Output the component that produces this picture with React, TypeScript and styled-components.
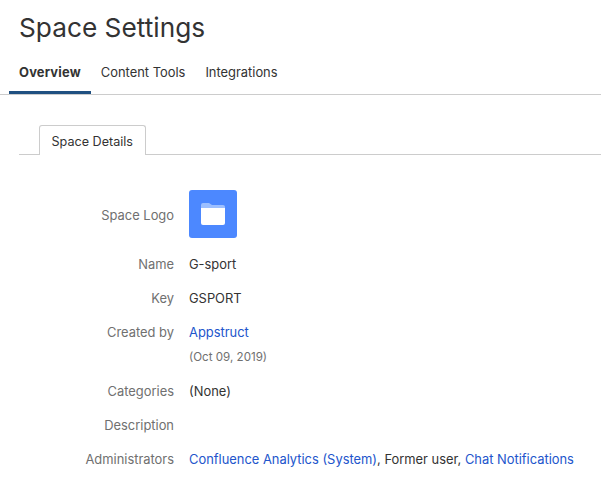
import React from 'react';
import styled, { createGlobalStyle } from 'styled-components';

const GlobalStyle = createGlobalStyle`
  html, body { margin: 0; padding: 0; background: #fff; }
  body {
    font-family: Inter, "Liberation Sans", sans-serif;
    font-size: 12.9px;
    color: #333;
    overflow: hidden;
  }
`;

const App = () => (
  <Page>
    <GlobalStyle />
    <Title>Space Settings</Title>
    <MainTabs>
      <MainTab $active>Overview</MainTab>
      <MainTab>Content Tools</MainTab>
      <MainTab>Integrations</MainTab>
    </MainTabs>
    <SubTabs>
      <SubTab>Space Details</SubTab>
    </SubTabs>
    <Details>
      <LogoRow>
        <LogoLabel>Space Logo</LogoLabel>
        <Logo>
          <svg width="24" height="22" viewBox="0 0 24 22">
            <path d="M0 2a2 2 0 0 1 2-2h6l3 2h11a2 2 0 0 1 2 2v4H0z" fill="#9cbfff" />
            <path d="M0 5h24v15a2 2 0 0 1-2 2H2a2 2 0 0 1-2-2z" fill="#fff" />
          </svg>
        </Logo>
      </LogoRow>
      <Row>
        <Label>Name</Label>
        <PlainText>G-sport</PlainText>
      </Row>
      <Row>
        <Label>Key</Label>
        <PlainText>GSPORT</PlainText>
      </Row>
      <CreatedRow>
        <Label>Created by</Label>
        <div>
          <Link>Appstruct</Link>
          <DateText>(Oct 09, 2019)</DateText>
        </div>
      </CreatedRow>
      <Row>
        <Label>Categories</Label>
        <PlainText>(None)</PlainText>
      </Row>
      <Row>
        <Label>Description</Label>
      </Row>
      <Row>
        <Label>Administrators</Label>
        <PlainText>
          <Link>Confluence Analytics (System)</Link>, Former user, <Link>Chat Notifications</Link>
        </PlainText>
      </Row>
    </Details>
  </Page>
);

export default App;

const Page = styled.div`
  width: 601px;
  height: 504px;
  overflow: hidden;
`;

const Title = styled.h1`
  margin: 0;
  padding: 12px 0 0 19px;
  font-size: 26.25px;
  line-height: 32px;
  font-weight: 400;
  color: #333;
`;

const MainTabs = styled.div`
  display: flex;
  height: 51px;
  padding-left: 9px;
  box-sizing: border-box;
  border-bottom: 1px solid #ccc;
`;

const MainTab = styled.div<{ $active?: boolean }>`
  padding: 0 10px;
  line-height: 58px;
  height: 50px;
  box-sizing: border-box;
  overflow: hidden;
  font-weight: ${(p) => (p.$active ? 700 : 400)};
  letter-spacing: ${(p) => (p.$active ? '0.2px' : '0')};
  color: #333;
  border-bottom: 3px solid ${(p) => (p.$active ? '#205081' : 'transparent')};
  margin-bottom: -1px;
`;

const SubTabs = styled.div`
  display: flex;
  margin: 30px 0 0 19px;
  padding-left: 20px;
  height: 29px;
  border-bottom: 1px solid #ccc;
`;

const SubTab = styled.div`
  height: 30px;
  box-sizing: border-box;
  padding: 0 11.5px;
  line-height: 31px;
  font-size: 12.6px;
  background: #fff;
  color: #333;
  border: 1px solid #ccc;
  border-bottom: none;
  border-radius: 3px 3px 0 0;
`;

const Details = styled.div`
  margin-top: 35px;
`;

const Row = styled.div`
  display: flex;
  gap: 15px;
  line-height: 22px;
  margin-bottom: 12px;
`;

const LogoRow = styled(Row)`
  align-items: center;
  margin-bottom: 16px;
`;

const CreatedRow = styled(Row)`
  margin-bottom: 15px;
`;

const Label = styled.div`
  width: 174px;
  flex: none;
  text-align: right;
  color: #707070;
`;

const LogoLabel = styled(Label)`
  padding-top: 4px;
`;

const PlainText = styled.div`
  color: #333;
`;

const Link = styled.a`
  color: #2255cc;
`;

const DateText = styled.div`
  margin-top: 4px;
  font-size: 11.6px;
  line-height: 18px;
  color: #707070;
`;

const Logo = styled.div`
  width: 48px;
  height: 48px;
  border-radius: 3px;
  background: #4c88ff;
  display: flex;
  align-items: center;
  justify-content: center;
`;
